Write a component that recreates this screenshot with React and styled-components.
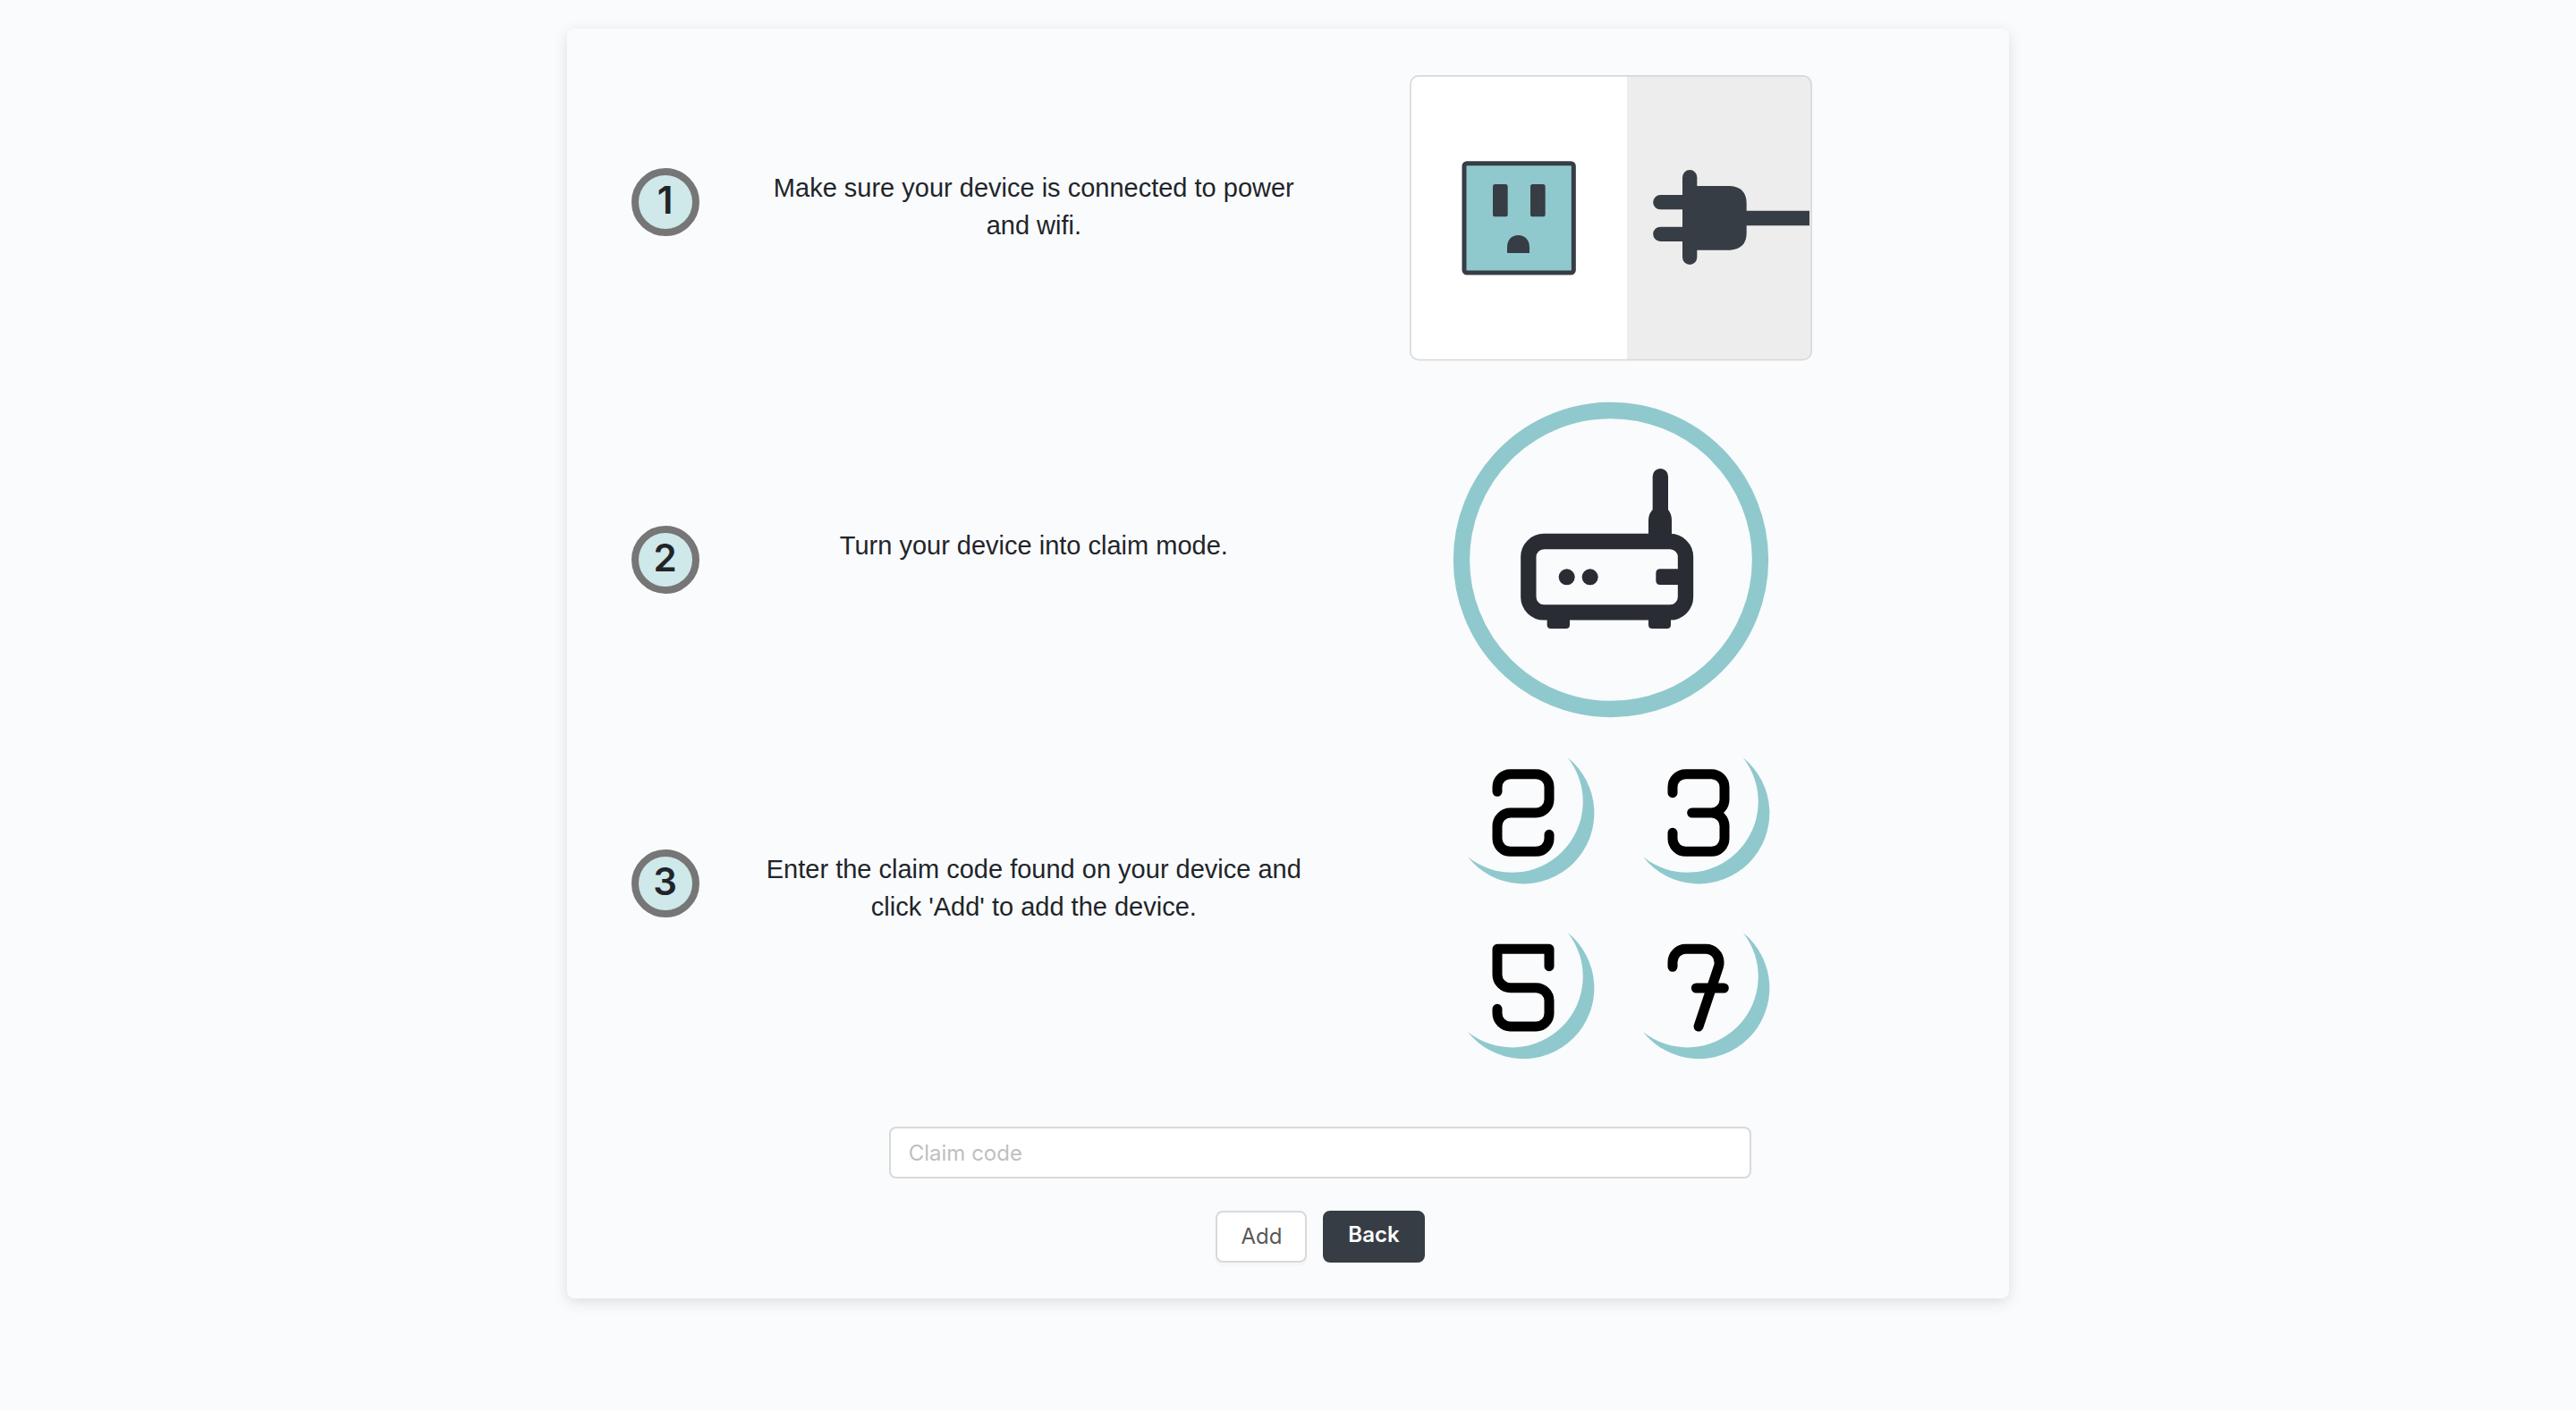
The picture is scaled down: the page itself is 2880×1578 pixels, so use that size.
import React from "react";
import styled, { createGlobalStyle, css } from "styled-components";

const color = {
  page: "#fafbfd",
  card: "#fafbfd",
  text: "#212529",
  dark: "#373d45",
  router: "#2a2c34",
  teal: "#90c9cd",
  mint: "#cfe8e9",
  ring: "#767676",
  line: "#d9d9d9",
};

const GlobalStyle = createGlobalStyle`
  *, *::before, *::after { box-sizing: border-box; }
  body {
    margin: 0;
    background: ${color.page};
    color: ${color.text};
    font-family: "Liberation Sans", Arial, sans-serif;
    font-size: 29px;
    line-height: 42px;
  }
`;

const Page = styled.main`
  display: flex;
  justify-content: center;
  padding: 32px 0;
`;

const Card = styled.section`
  width: 56%;
  padding: 52px 0 40px 72px;
  border-radius: 8px;
  background: ${color.card};
  box-shadow: 0 4px 16px rgba(0, 0, 0, 0.12);
`;

const Steps = styled.ol`
  display: flex;
  flex-direction: column;
  gap: 36px;
  margin: 0;
  padding: 0;
  list-style: none;
`;

const Step = styled.li`
  display: grid;
  grid-template-columns: 128fr 644fr 646fr 122fr;
  align-items: start;
`;

const Badge = styled.span`
  display: flex;
  align-items: center;
  justify-content: center;
  width: 76px;
  height: 76px;
  margin-top: ${(p) => p.$lead}px;
  padding-bottom: 4px;
  border: 8px solid ${color.ring};
  border-radius: 50%;
  background: ${color.mint};
  font-family: Inter, "Liberation Sans", sans-serif;
  font-size: 42px;
  font-weight: 600;
`;

const StepText = styled.p`
  margin: ${(p) => p.$lead}px 0 0;
  padding: 1px 16px 0;
  text-align: center;
`;

const Art = styled.svg`
  display: block;
  justify-self: center;
`;

const Form = styled.form`
  display: flex;
  flex-direction: column;
  align-items: center;
  gap: 36px;
  margin-top: 70px;
`;

const control = css`
  height: 58px;
  border: 2px solid ${color.line};
  border-radius: 8px;
  background: #fff;
  font-family: Inter, "Liberation Sans", sans-serif;
  font-size: 24px;
  line-height: 36px;
`;

const TextInput = styled.input`
  ${control}
  display: block;
  width: 62.6%;
  padding: 0 20px;
  color: ${color.text};
  &::placeholder { color: #bfbfbf; opacity: 1; }
`;

const Actions = styled.div`
  display: flex;
  gap: 18px;
`;

const Button = styled.button`
  ${control}
  padding: 0 26px;
  color: #595959;
  box-shadow: 0 4px 0 rgba(0, 0, 0, 0.02);
  cursor: pointer;
  ${(p) =>
    p.$primary &&
    css`
      padding-bottom: 4px;
      border-color: ${color.dark};
      background: ${color.dark};
      color: #fff;
      font-weight: 600;
      box-shadow: none;
    `}
`;

function OutletArt() {
  return (
    <Art width="450" height="320" viewBox="48 42 1350 960" aria-hidden="true">
      <clipPath id="outlet-frame">
        <rect x="50" y="44" width="1346" height="954" rx="28" />
      </clipPath>
      <g clipPath="url(#outlet-frame)">
        <rect x="48" y="42" width="730" height="960" fill="#fff" />
        <rect x="777" y="42" width="621" height="960" fill="#ededed" />
      </g>
      <rect x="50.5" y="44.5" width="1345" height="953" rx="28" fill="none" stroke="#d8d8d8" strokeWidth="5" />
      <rect x="231" y="338" width="367" height="367" rx="9" fill={color.teal} stroke={color.dark} strokeWidth="15" />
      <g fill={color.dark}>
        <rect x="327" y="408" width="50" height="109" rx="8" />
        <rect x="453" y="408" width="50" height="109" rx="8" />
        <path d="M375 639V620C375 594 391 579 412 579S450 594 450 620V639Z" />
        <rect x="963" y="360" width="49" height="318" rx="24.500" />
        <path d="M963 444H889a24.500 24.500 0 0 0 0 49H963ZM963 551H889a24.500 24.500 0 0 0 0 49H963Z" />
        <path d="M1000 414H1123Q1178 418 1178 472V497H1389V547H1178V572Q1178 624 1123 629H1000Z" />
      </g>
    </Art>
  );
}

function RouterArt() {
  return (
    <Art width="370" height="370" viewBox="48 30 1110 1110" aria-hidden="true">
      <circle cx="603" cy="588" r="501" fill="none" stroke={color.teal} strokeWidth="55" />
      <rect x="326.500" y="526.500" width="527" height="238" rx="52" fill="none" stroke={color.router} strokeWidth="52" />
      <g fill={color.router}>
        <path d="M729 510V455Q729 434 743 420V308a26 26 0 0 1 52 0V420Q807 434 807 455V510Z" />
        <circle cx="455" cy="646" r="27" />
        <circle cx="533" cy="646" r="27" />
        <path d="M840 619H768Q754 619 754 633V658Q754 672 768 672H840Z" />
        <path d="M389 780H465V806Q465 819 452 819H402Q389 819 389 806Z" />
        <path d="M729 780H804V806Q804 819 791 819H742Q729 819 729 806Z" />
      </g>
    </Art>
  );
}

const CRESCENT = "M458 82A237.700 237.700 0 1 1 123 415A237.700 237.700 0 0 0 458 82Z";

function CodeArt() {
  return (
    <Art width="370" height="344" viewBox="48 78 1110 1032" role="img" aria-label="2 3 5 7">
      <g fill={color.teal}>
        <path d={CRESCENT} />
        <path d={CRESCENT} transform="translate(588 0)" />
        <path d={CRESCENT} transform="translate(0 587)" />
        <path d={CRESCENT} transform="translate(588 587)" />
      </g>
      <g fill="none" stroke="#000" strokeWidth="33" strokeLinecap="round" strokeLinejoin="round">
        <path d="M222 196V181A44 44 0 0 1 266 137H352A44 44 0 0 1 396 181V223A44 44 0 0 1 352 267H266A44 44 0 0 0 222 311V353A44 44 0 0 0 266 397H352A44 44 0 0 0 396 353V340" />
        <path d="M810 200V181A44 44 0 0 1 854 137H940A44 44 0 0 1 984 181V223A44 44 0 0 1 940 267H875M940 267A44 44 0 0 1 984 311V353A44 44 0 0 1 940 397H854A44 44 0 0 1 810 353V334" />
        <path d="M396 782V724H222V810A44 44 0 0 0 266 854H352A44 44 0 0 1 396 898V940A44 44 0 0 1 352 984H266A44 44 0 0 1 222 940V925" />
        <path d="M810 784V768A44 44 0 0 1 854 724H922A44 44 0 0 1 966 768Q967 776 964 784L897 984M889 855H982" />
      </g>
    </Art>
  );
}

const steps = [
  { text: "Make sure your device is connected to power and wifi.", lead: 104, Picture: OutletArt },
  { text: "Turn your device into claim mode.", lead: 148, Picture: RouterArt },
  { text: "Enter the claim code found on your device and click 'Add' to add the device.", lead: 104, Picture: CodeArt },
];

export default function App() {
  return (
    <>
      <GlobalStyle />
      <Page>
        <Card>
          <Steps>
            {steps.map(({ text, lead, Picture }, i) => (
              <Step key={text}>
                <Badge $lead={lead}>{i + 1}</Badge>
                <StepText $lead={lead}>{text}</StepText>
                <Picture />
              </Step>
            ))}
          </Steps>
          <Form onSubmit={(e) => e.preventDefault()}>
            <TextInput type="text" name="claimCode" aria-label="Claim code" placeholder="Claim code" />
            <Actions>
              <Button type="submit">Add</Button>
              <Button type="button" $primary>Back</Button>
            </Actions>
          </Form>
        </Card>
      </Page>
    </>
  );
}
